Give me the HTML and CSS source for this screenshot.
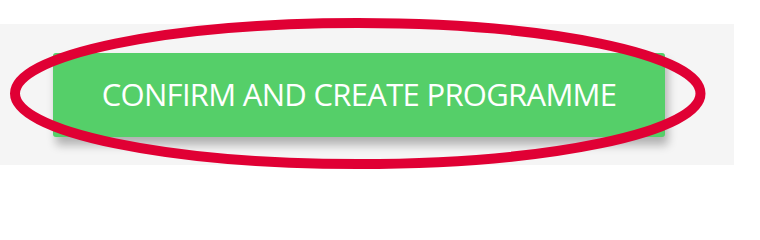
FILE: index.html
```html
<!DOCTYPE html>
<html lang="en">
<head>
<meta charset="utf-8">
<title>Confirm</title>
<link rel="stylesheet" href="styles.css">
</head>
<body>
<div class="stage">
  <div class="panel">
    <button class="btn" type="button">CONFIRM AND CREATE PROGRAMME</button>
  </div>
  <svg class="mark" width="760" height="202" viewBox="0 0 760 202" aria-hidden="true">
    <ellipse cx="357.75" cy="93.5" rx="342.75" ry="70.5" fill="none" stroke="#e00034" stroke-width="10"/>
  </svg>
</div>
</body>
</html>
```

FILE: styles.css
```css
html, body {
  margin: 0;
  padding: 0;
  background: #ffffff;
}
.stage {
  position: relative;
  width: 760px;
  height: 202px;
  padding-top: 24px;
  box-sizing: border-box;
}
.panel {
  width: 734px;
  height: 141px;
  box-sizing: border-box;
  padding: 29px 0 0 53px;
  background: #f5f5f5;
}
.btn {
  display: flex;
  align-items: center;
  justify-content: center;
  width: 612px;
  height: 84px;
  margin: 0;
  padding: 0 0 3px 0;
  border: 0;
  border-radius: 3px;
  background: #55cf69;
  color: #ffffff;
  font-family: "Open Sans", "Noto Sans", sans-serif;
  font-size: 31px;
  font-weight: 400;
  letter-spacing: -0.7px;
  box-shadow: 3px 8px 10px rgba(0, 0, 0, 0.28);
}
.mark {
  position: absolute;
  left: 0;
  top: 0;
  pointer-events: none;
}
```
